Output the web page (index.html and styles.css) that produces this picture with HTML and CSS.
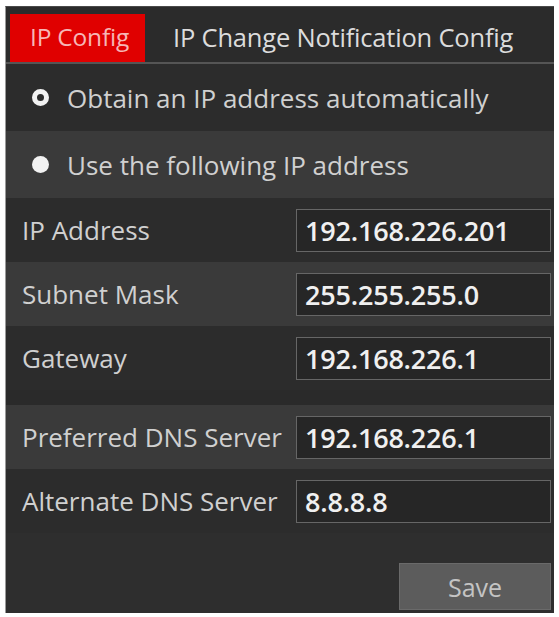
FILE: index.html
```html
<!DOCTYPE html>
<html lang="en">
<head>
<meta charset="UTF-8">
<meta name="viewport" content="width=device-width, initial-scale=1.0">
<title>IP Config</title>
<link rel="stylesheet" href="styles.css">
</head>
<body>

<div class="panel">
    <div class="tabs">
        <div class="tab active">IP Config</div>
        <div class="tab">IP Change Notification Config</div>
    </div>

    <div class="row radio-row dark">
        <span class="radio checked"></span>
        <span>Obtain an IP address automatically</span>
    </div>
    <div class="row radio-row light">
        <span class="radio"></span>
        <span>Use the following IP address</span>
    </div>

    <div class="row field dark">
        <label>IP Address</label>
        <div class="input">192.168.226.201</div>
    </div>
    <div class="row field light">
        <label>Subnet Mask</label>
        <div class="input">255.255.255.0</div>
    </div>
    <div class="row field dark">
        <label>Gateway</label>
        <div class="input">192.168.226.1</div>
    </div>

    <div class="spacer"></div>

    <div class="row field light">
        <label>Preferred DNS Server</label>
        <div class="input">192.168.226.1</div>
    </div>
    <div class="row field dark">
        <label>Alternate DNS Server</label>
        <div class="input">8.8.8.8</div>
    </div>

    <div class="footer">
        <button class="save">Save</button>
    </div>
</div>

</body>
</html>
```

FILE: styles.css
```css
body {
    margin: 0;
    background-color: #ffffff;
    font-family: "Open Sans", "Noto Sans", sans-serif;
}
.panel {
    margin: 6px 5px 3px 5px;
    background-color: #2e2e2e;
    border-left: 1px solid #9a9a9a;
    border-top: 1px solid #4a4a4a;
    height: 607px;
    box-sizing: border-box;
}
.tabs {
    display: flex;
    align-items: flex-end;
    height: 55px;
    padding-left: 4px;
    background-color: #2b2b2b;
    border-bottom: 2px solid #555;
}
.tab {
    height: 48px;
    line-height: 46px;
    padding: 0 18px;
    font-size: 25.5px;
    color: #dcdcdc;
    letter-spacing: -0.2px;
}
.tab.active {
    background-color: #e00000;
    color: #f6b6b6;
    font-size: 24.5px;
    padding: 0 16px 0 20px;
    margin-right: 10px;
}
.row {
    display: flex;
    align-items: center;
    font-size: 26px;
    color: #d0d0d0;
}
.row.dark {
    background-color: #2c2c2c;
}
.row.light {
    background-color: #3a3a3a;
}
.radio-row {
    height: 67px;
    padding-left: 26px;
}
.radio {
    width: 17px;
    height: 17px;
    border-radius: 50%;
    background-color: #f2f2f2;
    margin-right: 18px;
    box-sizing: border-box;
}
.radio.checked {
    border: 5px solid #f2f2f2;
    background-color: #2c2c2c;
}
.field {
    height: 64px;
    padding-left: 16px;
}
.field label {
    width: 274px;
    flex: none;
}
.input {
    width: 255px;
    height: 43px;
    line-height: 41px;
    box-sizing: border-box;
    border: 1px solid #666;
    background-color: #262626;
    color: #f0f0f0;
    font-size: 27px;
    font-weight: 600;
    letter-spacing: -0.2px;
    padding-left: 8px;
}
.spacer {
    height: 15px;
    background-color: #2a2a2a;
}
.footer {
    display: flex;
    justify-content: flex-end;
    padding: 30px 3px 0 0;
}
.save {
    width: 152px;
    height: 47px;
    background-color: #5c5c5c;
    border: 1px solid #6a6a6a;
    color: #c4c4c4;
    font-family: "Open Sans", "Noto Sans", sans-serif;
    font-size: 25px;
}
```
